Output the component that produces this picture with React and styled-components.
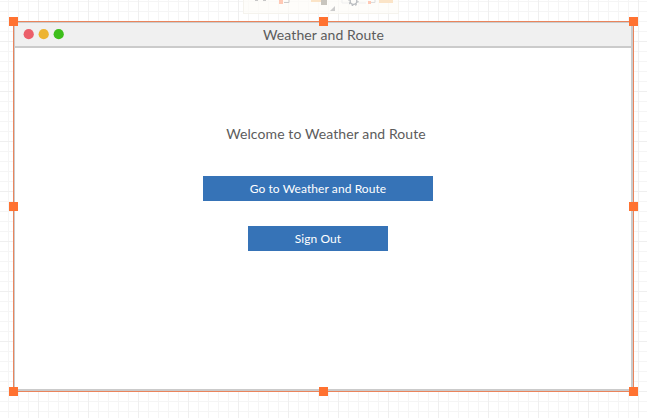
import React from "react";
import styled, { createGlobalStyle } from "styled-components";

const Global = createGlobalStyle`
  * { box-sizing: border-box; }
  body { margin: 0; background: #fff; overflow: hidden; font-family: Lato, sans-serif; }
`;

const Canvas = styled.main`
  position: relative;
  width: 647px;
  height: 418px;
  padding: 21px 13px 26px;
  overflow: hidden;
  background-color: #fff;
  background-image:
    linear-gradient(90deg, #efefef 1px, transparent 1px),
    linear-gradient(#efefef 1px, transparent 1px),
    linear-gradient(90deg, #f5f5f5 1px, transparent 1px),
    linear-gradient(#f5f5f5 1px, transparent 1px);
  background-size: 50px 50px, 50px 50px, 10px 10px, 10px 10px;
  background-position: 38px 0, 0 41px, 8px 0, 0 1px;
`;

const GhostToolbar = styled.svg`
  position: absolute;
  left: 243px;
  top: 0;
  width: 156px;
  height: 14px;
`;

const Selection = styled.div`
  position: relative;
  width: 621px;
  height: 371px;
  border: 1px solid #ea845c;
`;

const Handle = styled.i`
  position: absolute;
  left: ${(p) => p.$x}%;
  top: ${(p) => p.$y}%;
  width: 9px;
  height: 9px;
  background: #ff7231;
  transform: translate(${(p) => p.$dx}px, ${(p) => p.$dy}px);
`;

const Window = styled.section`
  display: flex;
  flex-direction: column;
  height: 100%;
  background: #fff;
  border: solid #cbcbcb;
  border-width: 1px 2px 2px 1px;
`;

const TitleBar = styled.header`
  display: grid;
  grid-template-columns: 60px 1fr 59px;
  align-items: center;
  height: 25px;
  flex: none;
  background: #f0f0f0;
  border-bottom: 2px solid #cbcbcb;
`;

const Lights = styled.svg`
  width: 60px;
  height: 23px;
`;

const Title = styled.h1`
  margin: 0;
  text-align: center;
  font-size: 14px;
  line-height: 22px;
  font-weight: 400;
  letter-spacing: 0.1px;
  color: #5c5c5c;
`;

const Content = styled.div`
  display: flex;
  flex-direction: column;
  align-items: center;
  padding: 74px 0 0;
`;

const Welcome = styled.p`
  margin: 0 0 0 6px;
  font-size: 14px;
  line-height: 24px;
  letter-spacing: 0.1px;
  color: #5c5c5c;
`;

const Button = styled.button`
  width: ${(p) => p.$width}px;
  height: 25px;
  margin: ${(p) => p.$gap}px 10px 0 0;
  padding: 0;
  border: 0;
  background: #3673b7;
  color: #fff;
  font: 400 12px/25px Lato, sans-serif;
  letter-spacing: 0.08px;
`;

const handles = [
  [0, 0, -5, -5], [50, 0, -5, -5], [100, 0, -4, -5],
  [0, 50, -5, -5], [100, 50, -4, -5],
  [0, 100, -5, -4], [50, 100, -5, -4], [100, 100, -4, -4],
];

export default function App() {
  return (
    <>
      <Global />
      <Canvas>
        <GhostToolbar viewBox="0 0 156 14">
          <rect x=".5" y="-1" width="155" height="14.5" fill="#fdfcf8" fillOpacity=".65" stroke="#f5f3ed" />
          <path d="M12 .5h3M20 .5h3" stroke="#c8c8c8" strokeWidth="1" />
          <rect x="36" y="0" width="4" height="4" fill="#ffc9b5" />
          <path d="M41 2.5h5V0" fill="none" stroke="#ccc" />
          <rect x="68" y="0" width="14" height="2" fill="#fbe4c7" />
          <rect x="78" y="0" width="6" height="5" fill="#c8c5be" />
          <path d="M87 11l5-5v5z" fill="#ccc" />
          <path d="M99 0v3h6M116 3h7" fill="none" stroke="#efefef" />
          <circle cx="110.5" cy="1" r="3.3" fill="none" stroke="#b9bcbf" strokeWidth="1.3" />
          <circle cx="110.5" cy="1" r="4.5" fill="none" stroke="#b9bcbf" strokeWidth="1.2" strokeDasharray="1.7 1.83" />
          <rect x="125" y="1" width="3" height="3" fill="#ffc9b5" />
          <path d="M128 2.5h4V0" fill="none" stroke="#ddd" />
          <rect x="136" y="0" width="14" height="3" fill="#fbe4c7" />
        </GhostToolbar>
        <Selection>
          <Window>
            <TitleBar>
              <Lights viewBox="0 0 60 23">
                <circle cx="13.7" cy="11.2" r="5.1" fill="#eb5f6a" />
                <circle cx="28.7" cy="11.2" r="5.1" fill="#edb431" />
                <circle cx="43.7" cy="11.2" r="5.1" fill="#3dbe1b" />
              </Lights>
              <Title>Weather and Route</Title>
            </TitleBar>
            <Content>
              <Welcome>Welcome to Weather and Route</Welcome>
              <Button $width={230} $gap={30}>Go to Weather and Route</Button>
              <Button $width={140} $gap={25}>Sign Out</Button>
            </Content>
          </Window>
          {handles.map(([x, y, dx, dy]) => (
            <Handle key={`${x}-${y}`} $x={x} $y={y} $dx={dx} $dy={dy} />
          ))}
        </Selection>
      </Canvas>
    </>
  );
}
